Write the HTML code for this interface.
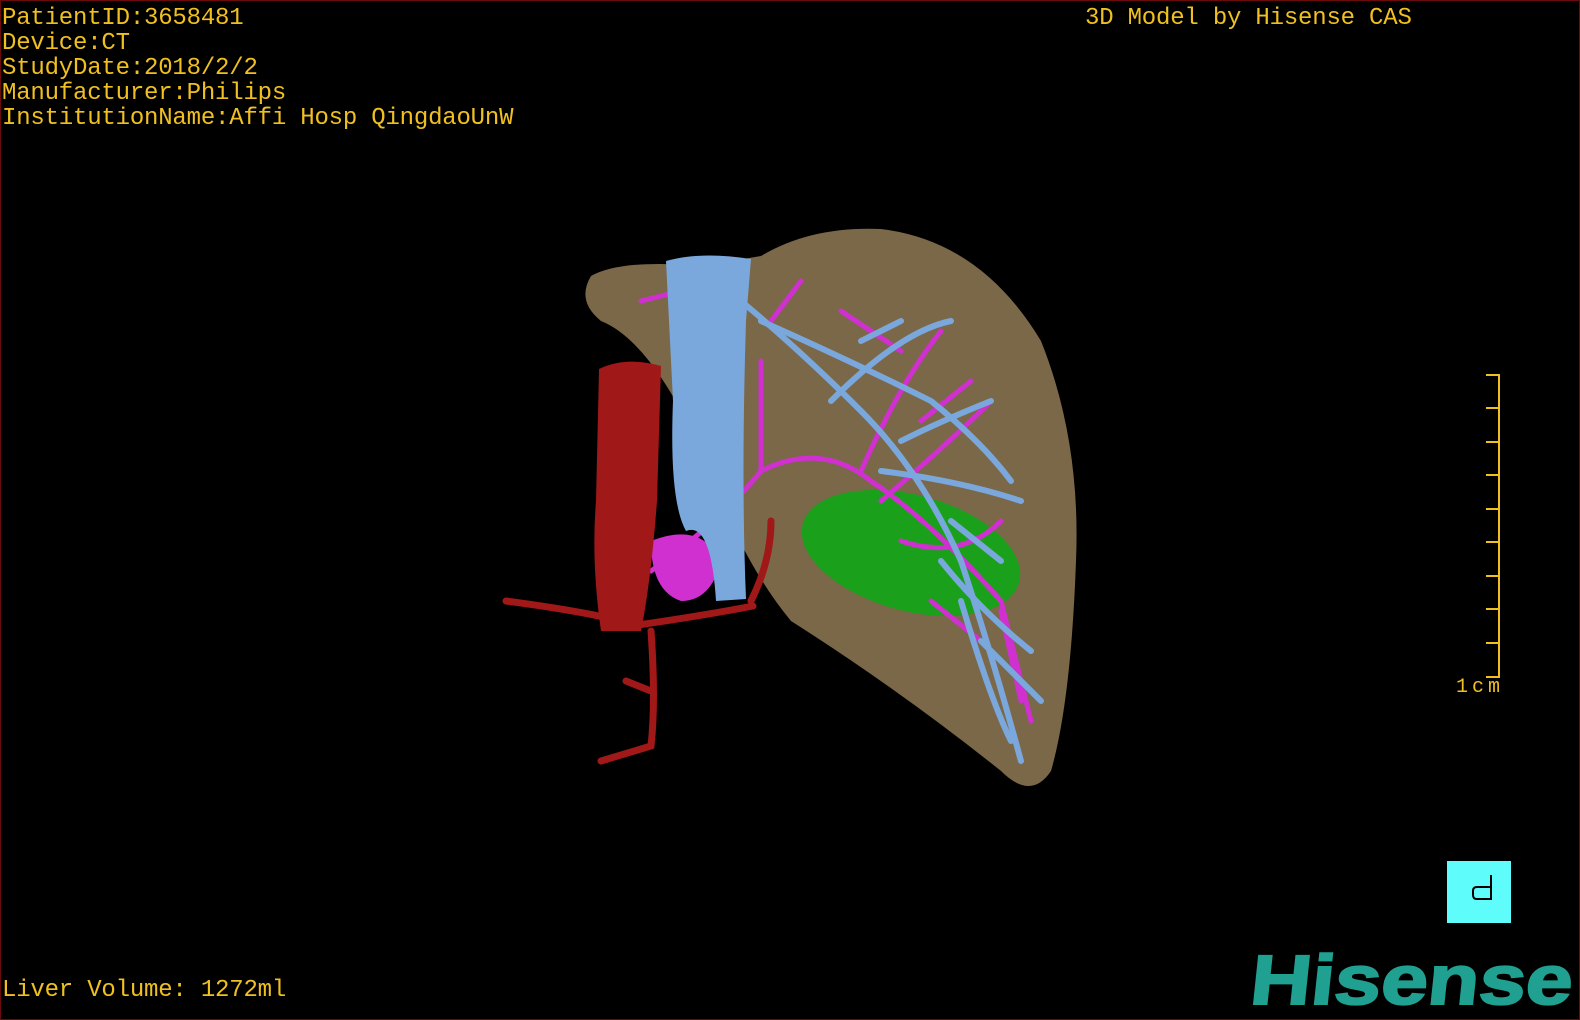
<!DOCTYPE html>
<html><head><style>
html,body{margin:0;padding:0;background:#000;}
#c{position:relative;width:1578px;height:1018px;border:1px solid #6a0a0a;background:#000;overflow:hidden;font-family:"Liberation Mono",monospace;}
.t{position:absolute;color:#f0c020;font-size:24px;line-height:25px;white-space:pre;letter-spacing:-0.2px;}
</style></head><body><div id="c">
<div class="t" style="left:1px;top:5px">PatientID:3658481
Device:CT
StudyDate:2018/2/2
Manufacturer:Philips
InstitutionName:Affi Hosp QingdaoUnW</div>
<div class="t" style="left:1084px;top:5px">3D Model by Hisense CAS</div>
<div class="t" style="left:1px;top:977px">Liver Volume: 1272ml</div>
<div class="t" style="left:1455px;top:674px;font-size:20px;letter-spacing:4px">1cm</div>
<svg width="1578" height="1018" style="position:absolute;left:0;top:0">
<g stroke="#f0c020" stroke-width="2" fill="none">
<path d="M1485 374H1498V676H1485"/>
<path d="M1485 407h13M1485 441h13M1485 474h13M1485 508h13M1485 541h13M1485 575h13M1485 608h13M1485 642h13"/>
</g>
<path d="M590 275 Q620 258 700 265 L760 255 Q810 225 880 228 Q980 240 1040 340 Q1080 440 1075 560 Q1070 700 1050 770 Q1030 800 1000 770 Q900 690 790 620 Q740 560 700 450 Q650 340 600 320 Q575 300 590 275Z" fill="#7a6848"/>
<ellipse cx="910" cy="552" rx="112" ry="58" transform="rotate(15 910 552)" fill="#1aa01a"/>
<g stroke="#d030d0" stroke-width="5" fill="none" stroke-linecap="round">
<path d="M650 570 Q720 520 760 470 Q820 440 870 480 Q930 520 1000 600 Q1020 680 1030 720"/>
<path d="M760 470 L760 360 M860 470 Q900 380 940 330 M880 500 Q950 440 990 400 M900 540 Q960 560 1000 520 M770 320 L800 280 M640 300 L680 290 M840 310 L900 350 M920 420 L970 380 M930 600 L980 640 M1000 610 L1020 700"/>
</g>
<path d="M650 540 Q700 520 720 560 Q710 600 680 600 Q650 590 650 540Z" fill="#d030d0"/>
<g stroke="#7aa8dc" stroke-width="6" fill="none" stroke-linecap="round">
<path d="M740 300 Q800 350 860 410 Q920 470 960 560 Q990 650 1020 760"/>
<path d="M760 320 Q850 360 930 400 Q980 440 1010 480 M830 400 Q900 330 950 320 M880 470 Q960 480 1020 500 M940 560 Q980 610 1030 650 M960 600 Q990 700 1010 740 M900 440 Q940 420 990 400 M950 520 L1000 560 M980 640 L1040 700 M860 340 L900 320"/>
</g>
<path d="M665 260 Q700 250 750 258 L745 320 Q740 480 745 598 L715 600 Q710 520 685 530 Q668 500 672 400 Z" fill="#7aa8dc"/>
<path d="M598 368 Q625 355 660 365 L656 500 Q650 580 640 630 L600 630 Q590 560 595 500Z" fill="#a01818"/>
<g stroke="#a01818" stroke-width="7" fill="none" stroke-linecap="round">
<path d="M620 620 Q580 610 505 600 M630 625 Q700 615 752 605 M650 630 Q655 700 650 745 L600 760 M650 690 L625 680 M750 600 Q770 560 770 520"/>
</g>
<rect x="1446" y="860" width="64" height="62" fill="#5ffcfc"/>
<path d="M1490 874V898H1476Q1472 898 1472 894V890Q1472 886 1476 886H1490" stroke="#000" stroke-width="2" fill="none"/>
<text x="1248" y="1003" transform="skewX(-6) translate(105 0)" font-family="Liberation Sans,sans-serif" font-weight="bold" font-size="70" fill="#20a090" stroke="#20a090" stroke-width="2" textLength="322" lengthAdjust="spacingAndGlyphs">Hisense</text>
</svg>
</div></body></html>
